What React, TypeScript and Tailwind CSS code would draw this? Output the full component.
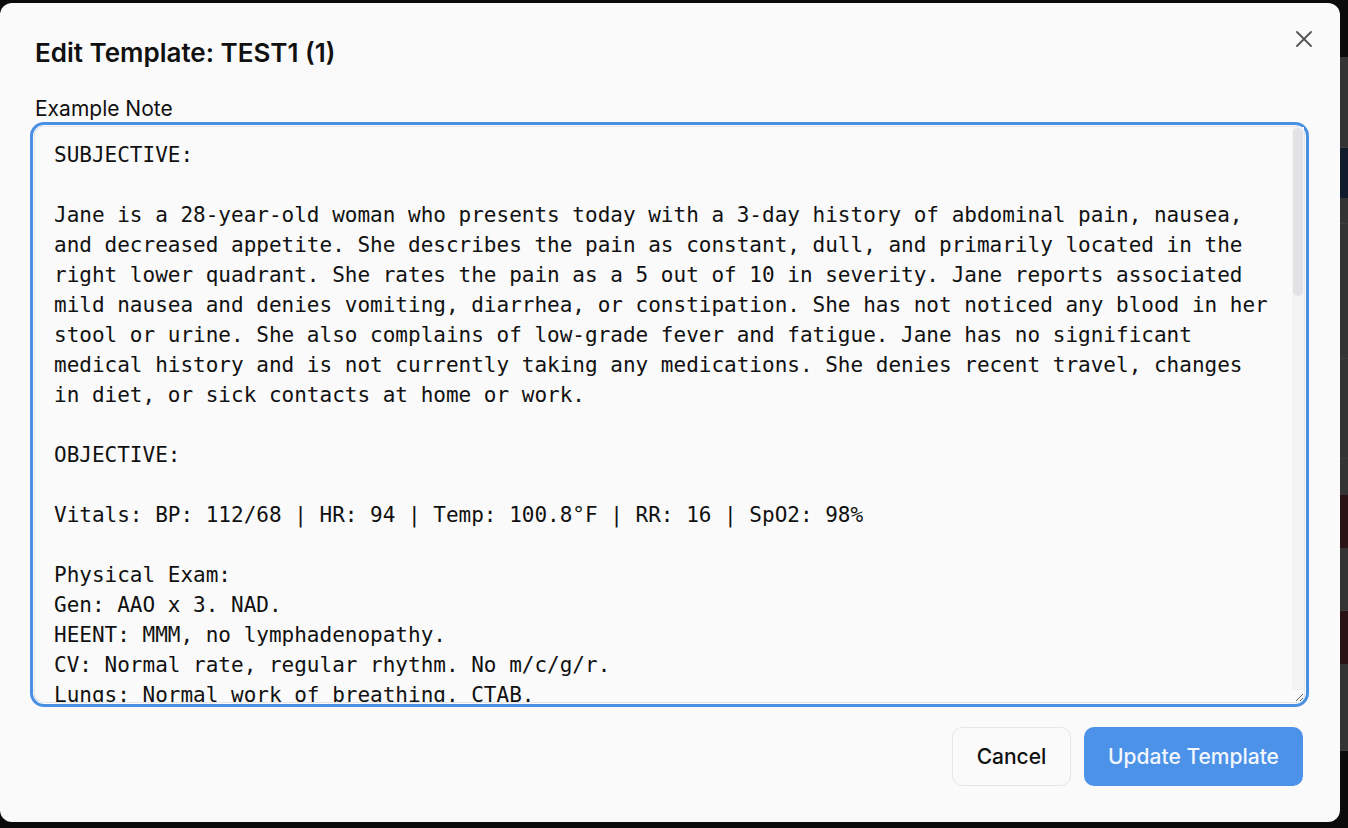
import React from 'react';
import { X } from 'lucide-react';

const NOTE = `SUBJECTIVE:

Jane is a 28-year-old woman who presents today with a 3-day history of abdominal pain, nausea,
and decreased appetite. She describes the pain as constant, dull, and primarily located in the
right lower quadrant. She rates the pain as a 5 out of 10 in severity. Jane reports associated
mild nausea and denies vomiting, diarrhea, or constipation. She has not noticed any blood in her
stool or urine. She also complains of low-grade fever and fatigue. Jane has no significant
medical history and is not currently taking any medications. She denies recent travel, changes
in diet, or sick contacts at home or work.

OBJECTIVE:

Vitals: BP: 112/68 | HR: 94 | Temp: 100.8°F | RR: 16 | SpO2: 98%

Physical Exam:
Gen: AAO x 3. NAD.
HEENT: MMM, no lymphadenopathy.
CV: Normal rate, regular rhythm. No m/c/g/r.
Lungs: Normal work of breathing. CTAB.
Abdomen: Soft, tender to palpation in the RLQ with mild guarding. Positive McBurney's point
tenderness. Positive Rovsing's sign. No rebound tenderness. Normal bowel sounds.
Ext: No edema. Pulses 2+ bilaterally.
Skin: Warm and dry. No rashes.
Neuro: No focal deficits.

Labs:
CBC: WBC 13.2 (H) with left shift, Hgb 13.1, Plt 265
BMP: Within normal limits
LFTs: Within normal limits
Lipase: 32
CRP: 4.8 (H)
Lactate: 1.1
Urinalysis: Negative for leukocytes, nitrites, and blood
Urine hCG: Negative

Imaging:
CT abdomen/pelvis with contrast: Dilated appendix measuring 9 mm with periappendiceal fat
stranding, consistent with acute appendicitis. No evidence of perforation or abscess.

ASSESSMENT AND PLAN:

1. Acute appendicitis
- Jane presents with RLQ abdominal pain, nausea, low-grade fever, and leukocytosis with CT
findings consistent with acute uncomplicated appendicitis.
- Surgical consult placed for evaluation for laparoscopic appendectomy.
- Keep NPO.
- Start IV fluids: LR at 125 mL/hr.
- Start IV antibiotics: ceftriaxone 2 g IV and metronidazole 500 mg IV.
- Pain control: morphine 4 mg IV q4h PRN for severe pain.
- Antiemetic: ondansetron 4 mg IV q6h PRN for nausea.

2. Fever
- Likely secondary to acute appendicitis.
- Acetaminophen 1 g IV q6h PRN for fever.
- Monitor temperature.

3. Disposition
- Admit to surgical service.
- Reassess after surgical evaluation.
- Patient and family updated on plan of care and agree with plan.

4. Health maintenance
- Up to date on vaccinations.
- Counseled on warning signs and return precautions.`;

export default function App() {
  return (
    <div className="relative h-[828px] w-[1348px] overflow-hidden bg-[#0b0b0b] font-['Inter',sans-serif]">
      {/* dimmed page behind the modal */}
      <div className="flex h-full flex-col">
        <div className="h-[57px] bg-[#0b0b0b]" />
        <div className="h-[91px] border-b border-[#3d3d3d] bg-[#343434]" />
        <div className="h-[50px] bg-[#121b2c]" />
        <div className="h-[26px] border-b border-[#3d3d3d] bg-[#343434]" />
        <div className="h-[135px] border-b border-[#3d3d3d] bg-[#343434]" />
        <div className="h-[100px] border-b border-[#3d3d3d] bg-[#343434]" />
        <div className="h-[36px] bg-[#343434]" />
        <div className="h-[53px] bg-[#2b1315]" />
        <div className="h-[63px] border-b border-[#3d3d3d] bg-[#343434]" />
        <div className="h-[53px] bg-[#2b1315]" />
        <div className="h-[87px] border-b border-[#3d3d3d] bg-[#343434]" />
        <div className="flex-1 bg-[#0b0b0b]" />
      </div>

      {/* modal */}
      <div className="absolute left-0 top-[3px] flex h-[819px] w-[1340px] flex-col rounded-[12px] bg-[#fafafa] pb-[36px] pl-[35px] pr-[37px] pt-[32px]">
        <button className="absolute right-[22px] top-[22px] text-[#555]">
          <X size={28} strokeWidth={1.6} />
        </button>

        <h2 className="text-[26px] font-semibold leading-[36px] text-[#111]">Edit Template: TEST1 (1)</h2>

        <label className="mt-[26px] text-[21px] leading-[24px] text-[#111]">Example Note</label>

        <div className="relative ml-[-1px] mt-[5px] h-[577px] w-[1271px]">
          <textarea
            defaultValue={NOTE}
            spellCheck={false}
            className="h-full w-full rounded-[10px] border border-[#e6e6e8] bg-[#fafafa] pb-[13px] pl-[19px] pr-[14px] pt-[13px] font-['DejaVu_Sans_Mono',monospace] text-[21px] leading-[30px] text-[#111] outline-none ring-[3px] ring-[#4a90e2] ring-offset-1 ring-offset-[#fafafa]"
          />
          {/* scrollbar */}
          <div className="pointer-events-none absolute bottom-[13px] right-[1px] top-[1px] w-[12px] bg-[#f3f3f4] px-[1px] pt-[1px]">
            <div className="h-[168px] rounded-full bg-[#e2e2e5]" />
          </div>
        </div>

        <div className="mt-[24px] flex justify-end gap-[13px]">
          <button className="h-[59px] w-[119px] rounded-[10px] border border-[#e6e6e8] bg-[#fafafa] text-[21px] font-medium text-[#111]">
            Cancel
          </button>
          <button className="h-[59px] w-[219px] rounded-[10px] bg-[#4b92e8] text-[21px] font-medium text-[#f2f7fd]">
            Update Template
          </button>
        </div>
      </div>
    </div>
  );
}
